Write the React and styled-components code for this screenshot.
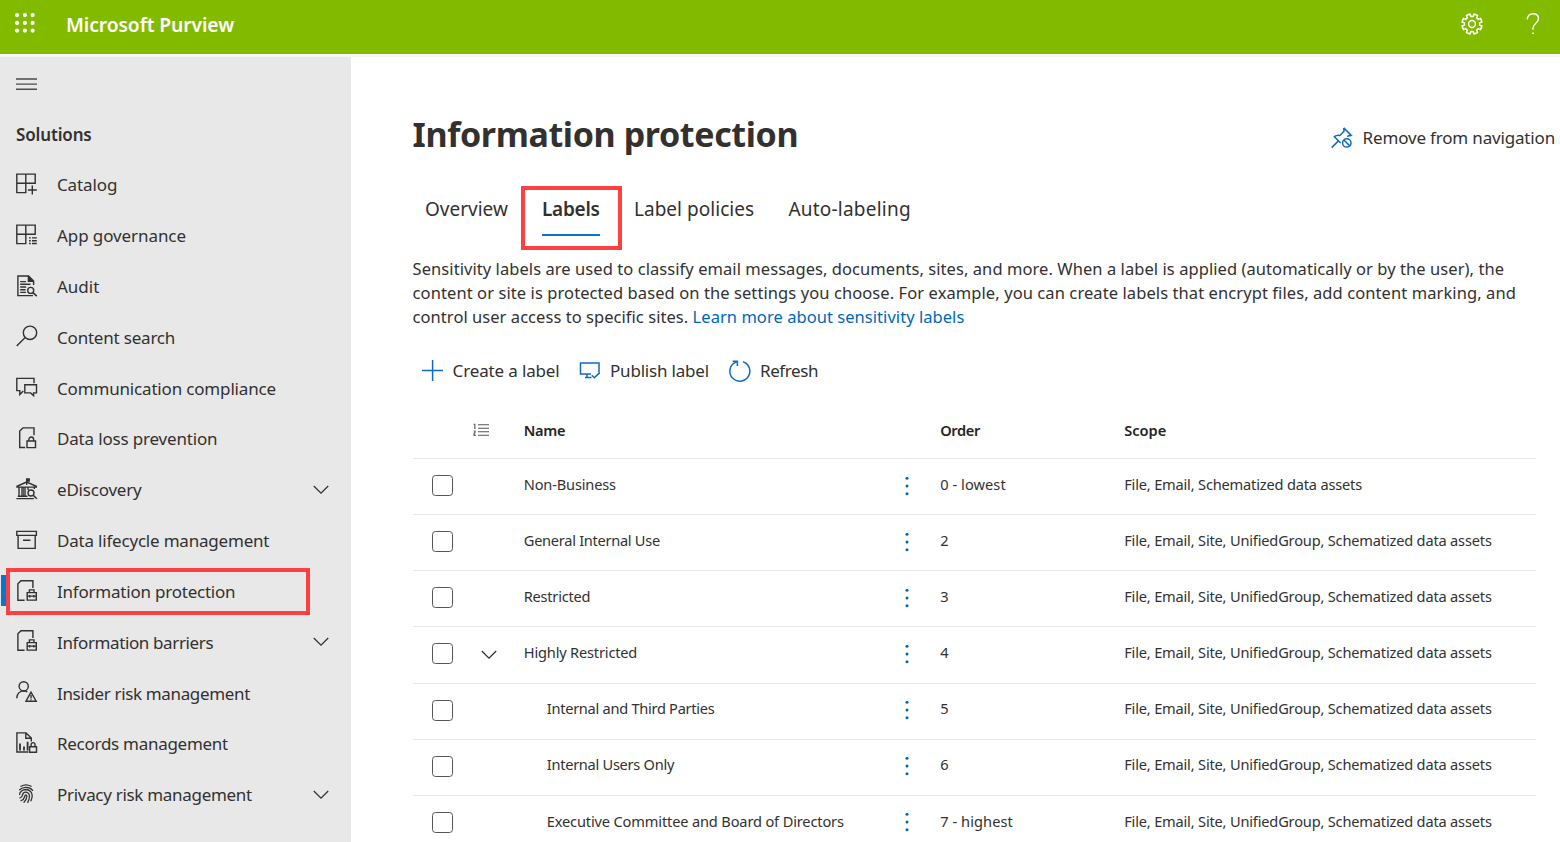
import React from "react";
import styled, { createGlobalStyle } from "styled-components";

const GlobalStyle = createGlobalStyle`
  * { box-sizing: border-box; }
  html, body { margin: 0; padding: 0; background: #fff; }
  body {
    font-family: "Noto Sans", "Open Sans", sans-serif;
    color: #323130;
    overflow: hidden;
  }
  svg { display: block; flex: none; }
`;

const Page = styled.div`
  width: 1560px;
  height: 842px;
  display: flex;
  flex-direction: column;
  overflow: hidden;
`;

const TopBar = styled.header`
  height: 54px;
  flex: none;
  display: flex;
  align-items: center;
  background: #82ba00;
  color: #fff;
  padding: 0 20px 6px 14px;
`;

const Brand = styled.div`
  margin-left: 30px;
  margin-right: auto;
  font-size: 19.3px;
  font-weight: 600;
  line-height: 26px;
  padding-top: 2px;
  white-space: nowrap;
  letter-spacing: -0.1px;
`;

const TopActions = styled.div`
  display: flex;
  align-items: center;
  gap: 43px;
`;

const Divider = styled.div`
  height: 3px;
  flex: none;
  background: linear-gradient(#fbfdf5, #f3f3f3);
`;

const Body = styled.div`
  flex: 1;
  min-height: 0;
  display: flex;
`;

const Sidebar = styled.nav`
  width: 351px;
  flex: none;
  background: #e8e8e8;
  padding-top: 16px;
`;

const MenuButton = styled.div`
  height: 22px;
  padding-left: 16px;
`;

const NavHeading = styled.div`
  padding-left: 16px;
  margin-top: 27px;
  height: 26px;
  line-height: 26px;
  font-size: 17px;
  font-weight: 600;
  letter-spacing: -0.15px;
`;

const NavList = styled.div`
  margin-top: 11.6px;
`;

const NavItem = styled.div`
  position: relative;
  height: 50.83px;
  display: flex;
  align-items: center;
  padding: 0 22px 0 16px;
`;

const NavIcon = styled.div`
  width: 22px;
  height: 22px;
  margin: 0 19px 2px 0;
`;

const NavLabel = styled.div`
  flex: 1;
  font-size: 17px;
  padding-bottom: 0.5px;
  white-space: nowrap;
  letter-spacing: ${(p) => p.$ls || 0}px;
`;

const ActiveMark = styled.div`
  position: absolute;
  left: 1px;
  top: 9px;
  width: 6px;
  height: 31px;
  background: #0078d4;
`;

const Highlight = styled.div`
  position: absolute;
  left: ${(p) => p.$x}px;
  top: ${(p) => p.$y}px;
  width: ${(p) => p.$w}px;
  height: ${(p) => p.$h}px;
  border: 4.4px solid #fe4040;
  pointer-events: none;
`;

const Main = styled.main`
  flex: 1;
  min-width: 0;
  padding: 51px 0 0 61.6px;
`;

const TitleRow = styled.div`
  display: flex;
  align-items: center;
  justify-content: space-between;
  height: 52px;
  padding-right: 5px;
`;

const Title = styled.h1`
  margin: 0;
  font-size: 34px;
  line-height: 52px;
  font-weight: 700;
  white-space: nowrap;
  letter-spacing: -0.37px;
`;

const RemoveAction = styled.div`
  display: flex;
  align-items: center;
  gap: 10px;
  padding-top: 7px;
  font-size: 17px;
  line-height: 24px;
  white-space: nowrap;
  letter-spacing: -0.17px;
`;

const Tabs = styled.div`
  display: flex;
  margin-top: 31px;
  padding-left: 12.4px;
  height: 60px;
`;

const Tab = styled.div`
  position: relative;
  width: ${(p) => p.$w}px;
  height: 45px;
  line-height: 37px;
  font-size: 19px;
  font-weight: ${(p) => (p.$active ? 600 : 400)};
  white-space: nowrap;
  letter-spacing: ${(p) => p.$ls || 0}px;
  margin-right: ${(p) => p.$gap}px;
  border-bottom: 2.5px solid ${(p) => (p.$active ? "#0b6fd3" : "transparent")};
`;

const Intro = styled.div`
  font-size: 16.5px;
  line-height: 24px;
  margin-top: 6px;
`;

const IntroLine = styled.div`
  white-space: nowrap;
  letter-spacing: ${(p) => p.$ls || 0}px;
`;

const Link = styled.span`
  color: #0067b8;
`;

const CommandBar = styled.div`
  display: flex;
  align-items: center;
  height: 24px;
  margin-top: 30px;
  padding-left: 9px;
`;

const Command = styled.div`
  display: flex;
  align-items: center;
  gap: 9px;
  width: ${(p) => p.$w}px;
  font-size: 17px;
  line-height: 24px;
  white-space: nowrap;
  letter-spacing: ${(p) => p.$ls || 0}px;
`;

const Table = styled.div`
  width: 1123.4px;
  margin-top: 20px;
`;

const Row = styled.div`
  display: grid;
  grid-template-columns: 60px 51.2px 375px 41.4px 184px 1fr;
  align-items: center;
  height: ${(p) => (p.$head ? 56 : 56.15)}px;
  border-bottom: 1px solid #e6e6e6;
  font-size: 14.6px;
  font-weight: ${(p) => (p.$head ? 600 : 400)};
  color: ${(p) => (p.$head ? "#242424" : "#323130")};
`;

const Cell = styled.div`
  white-space: nowrap;
  line-height: 22px;
  padding-left: ${(p) => p.$indent || 0}px;
  padding-bottom: ${(p) => (p.$head ? 1 : 5.8)}px;
  letter-spacing: ${(p) => p.$ls || 0}px;
`;

const IconCell = styled.div`
  display: flex;
  padding-left: ${(p) => p.$pad || 0}px;
  padding-bottom: ${(p) => p.$lift || 0}px;
`;

const Checkbox = styled.span`
  width: 21px;
  height: 21px;
  margin: 0 0 2px 19px;
  border: 1.5px solid #555;
  border-radius: 3.5px;
  background: #fff;
`;

function Icon({ size = 22, color = "#323130", sw = 1.4, children }) {
  return (
    <svg width={size} height={size} viewBox="0 0 22 22" fill="none" stroke={color} strokeWidth={sw}>
      {children}
    </svg>
  );
}

const grid = <path d="M.8 1.1H19.2V10.3H.8ZM.8 10.3V19.6H9.8V1.1" />;
const briefcaseDoc = (
  <>
    <path d="M16.9 8V.8H5L1.9 3.8V20.2H8.6" />
    <path d="M11.2 12.6H20.3V20.1H11.2ZM13.4 12.4V9.9H18V12.4M11.2 16.1H20.3M13.7 14.9V17.6M17.8 14.9V17.6" />
  </>
);

const icons = {
  catalog: (
    <>
      {grid}
      <path d="M16.3 12.4V21.4M11.9 17H20.8" />
    </>
  ),
  governance: (
    <>
      {grid}
      <path d="M13 13.9H14.8M13 16.7H14.8M13 19.5H14.8M16 13.9H20.8M16 16.7H20.8M16 19.5H20.8" />
    </>
  ),
  audit: (
    <>
      <path d="M17 20.6H1.9V1H12.6L17.6 6V10M12.4 1V6.2H17.6" />
      <path d="M12.8 2.2L16.5 6H12.8Z" fill="#323130" />
      <path d="M4.2 6.6H10M4.2 9.3H14.5M4.2 12H10.2M4.2 14.7H9.6M4.2 17.4H10" />
      <circle cx="14.7" cy="15.4" r="3" />
      <path d="M16.9 17.6L20.8 21.2" strokeWidth="1.6" />
    </>
  ),
  search: (
    <>
      <circle cx="14" cy="7.8" r="6.7" />
      <path d="M9.2 12.6L.7 21" />
    </>
  ),
  chat: (
    <>
      <path d="M18 7.2V2.4H.8V14.6H3.8V18.6L7.3 15" />
      <path d="M8.8 8.7H20.5V16.9H17.6V19.6L14.6 16.9H8.8Z" />
    </>
  ),
  lockDoc: (
    <>
      <path d="M18 8.3V.9H7L3.7 4V20.5H9.2" />
      <path d="M11 14H19.5V20.6H11ZM12.9 14V12.4A2.35 2.35 0 0 1 17.6 12.4V14" />
    </>
  ),
  court: (
    <>
      <path d="M10.7 7V1" />
      <path d="M10.7 1H13.2V3H10.7Z" fill="#323130" />
      <path d="M10.7 4L1 8.3V9.1H20.3V8.3Z" />
      <path d="M3 9V18.4M6 9V18.4M9 9V18.4M12 9V12M18.3 9V11M1.8 18.3H11.5M.4 20.6H17.8" />
      <path d="M7.5 9V18.4" strokeWidth=".8" />
      <circle cx="15" cy="15" r="3" />
      <path d="M17.2 17.2L20.8 20.8" strokeWidth="1.6" />
    </>
  ),
  archive: <path d="M.8 2.4H20.4V6.4H.8ZM2.1 6.4V19.4H19.2V6.4M7 11.3H14.4" />,
  briefcaseDoc,
  personAlert: (
    <>
      <circle cx="7.7" cy="5.3" r="4.6" />
      <path d="M.7 17.2C1.1 12.8 3.8 10.1 7.6 9.9C9 9.9 10.2 10.2 11.3 10.9" />
      <path d="M15 11.2L10 20.2H20.2Z" />
      <path d="M15 14V17.5M15 18.3V19.3" />
    </>
  ),
  records: (
    <>
      <path d="M12.4 20H.9V.9H10L15.3 6V9.6M9.8 .9V6.2H15.3" />
      <path d="M4 18.5V11.5M8 18.5V14.6M11.6 18.5V9.8" strokeWidth="1.8" />
      <path d="M13.6 14.7H20.5V20.2H13.6ZM15.1 14.7V12.6A1.95 1.95 0 0 1 19 12.6V14.7" />
    </>
  ),
  fingerprint: (
    <g strokeWidth="1.3" strokeLinecap="round">
      <path d="M4.9 3.3C7.9 1.6 12.1 1.6 15.1 3.3" />
      <path d="M3.7 6.8C6.8 3.6 13.6 3.6 16.6 7.4" />
      <path d="M3.6 11.6C3.7 8.6 6.6 6.5 10 6.5C13.8 6.6 16.3 9.4 16.2 13C16.1 14.8 15.6 16.4 15 17.8" />
      <path d="M4 14.9C7.4 14.2 5.8 11.6 7.4 10C9.4 8.2 13.2 9.2 13.5 12.6C13.6 15 12.8 17.4 11.8 19.4" />
      <path d="M5.1 17.7C8.8 16.6 8.3 13.8 9.1 12.4C9.9 11.5 10.9 12.1 10.9 13.2C10.7 15.8 9.6 17.8 8 19.3" />
    </g>
  ),
};

const Chevron = ({ color = "#323130" }) => (
  <svg width="16" height="10" viewBox="0 0 16 10" fill="none" stroke={color} strokeWidth="1.3">
    <path d="M.8 1L8 8.2L15.2 1" />
  </svg>
);

const gearOutline = () => {
  const parts = [];
  for (let i = 0; i < 8; i++) {
    const base = ((i + 0.5) * Math.PI) / 4;
    [[-0.25, 7.7], [-0.19, 10.2], [0.19, 10.2], [0.25, 7.7]].forEach(([d, r]) => {
      parts.push(`${(11 + r * Math.sin(base + d)).toFixed(2)} ${(11 - r * Math.cos(base + d)).toFixed(2)}`);
    });
  }
  return `M${parts.join("L")}Z`;
};

const Waffle = () => (
  <svg width="22" height="22" viewBox="0 0 22 22" fill="#fff">
    {[2.1, 9.9, 17.6].map((y) => [3.1, 10.9, 18.6].map((x) => <circle key={`${x}-${y}`} cx={x} cy={y} r="2.1" />))}
  </svg>
);

const PinIcon = () => (
  <Icon color="#0f6cbd" sw={1.5}>
    <path d="M.7 20.6L7.4 13.9M12.7 .9L20.3 8.4L19.2 8.8L17.6 8.6L16.4 9.7M9.6 16L3.4 9.7C5 8.4 6.9 8 8.9 8.4L13 4.2L12.7 .9" />
    <circle cx="15.8" cy="15.9" r="4.2" />
    <path d="M12.9 13L18.8 18.9" />
  </Icon>
);

const ListIcon = () => (
  <svg width="16" height="14" viewBox="0 0 16 14" fill="none" stroke="#555" strokeWidth="1.1">
    <path d="M5 1.8H16M5 5.2H16M5 8.8H16M5 12.2H16M.6 1.2H1.8V5.2M1 5.2H2.8M.6 8H2V9.8L1.1 10.2V12.4H2.8" />
  </svg>
);

const MoreIcon = () => (
  <svg width="4" height="20" viewBox="0 0 4 20" fill="#0067b8">
    <circle cx="2" cy="2.3" r="1.5" />
    <circle cx="2" cy="10" r="1.5" />
    <circle cx="2" cy="17.7" r="1.5" />
  </svg>
);

const navItems = [
  { label: "Catalog", icon: "catalog", ls: -0.12 },
  { label: "App governance", icon: "governance", ls: -0.09 },
  { label: "Audit", icon: "audit" },
  { label: "Content search", icon: "search", ls: -0.2 },
  { label: "Communication compliance", icon: "chat", ls: -0.17 },
  { label: "Data loss prevention", icon: "lockDoc", ls: -0.17 },
  { label: "eDiscovery", icon: "court", expandable: true, ls: -0.2 },
  { label: "Data lifecycle management", icon: "archive", ls: -0.2 },
  { label: "Information protection", icon: "briefcaseDoc", active: true, ls: -0.22 },
  { label: "Information barriers", icon: "briefcaseDoc", expandable: true, ls: -0.38 },
  { label: "Insider risk management", icon: "personAlert", ls: -0.35 },
  { label: "Records management", icon: "records", ls: -0.28 },
  { label: "Privacy risk management", icon: "fingerprint", expandable: true, ls: -0.3 },
];

const fullScope = "File, Email, Site, UnifiedGroup, Schematized data assets";
const rows = [
  { name: "Non-Business", order: "0 - lowest", scope: "File, Email, Schematized data assets", ls: -0.17 },
  { name: "General Internal Use", order: "2", scope: fullScope, ls: -0.28 },
  { name: "Restricted", order: "3", scope: fullScope, ls: -0.25 },
  { name: "Highly Restricted", order: "4", scope: fullScope, open: true, ls: -0.18 },
  { name: "Internal and Third Parties", order: "5", scope: fullScope, child: true, ls: -0.28 },
  { name: "Internal Users Only", order: "6", scope: fullScope, child: true, ls: -0.28 },
  { name: "Executive Committee and Board of Directors", order: "7 - highest", scope: fullScope, child: true, ls: -0.15 },
];

export default function App() {
  return (
    <Page>
      <GlobalStyle />
      <TopBar>
        <Waffle />
        <Brand>Microsoft Purview</Brand>
        <TopActions>
          <Icon color="#fff" sw={1.5}>
            <path d={gearOutline()} strokeLinejoin="round" />
            <circle cx="11" cy="11" r="3.4" />
          </Icon>
          <svg width="14" height="22" viewBox="0 0 14 22" fill="none" stroke="#fff" strokeWidth="1.4">
            <path d="M1.3 6.4C1.3 3 3.7 .8 7 .8C10.3 .8 12.5 2.8 12.5 5.8C12.5 10 7 10.4 7 15V16.8" />
            <path d="M7 19.4V21" strokeWidth="1.6" />
          </svg>
        </TopActions>
      </TopBar>
      <Divider />
      <Body>
        <Sidebar>
          <MenuButton>
            <svg width="21" height="22" viewBox="0 0 21 22" stroke="#4a4a4a" strokeWidth="1.4">
              <path d="M0 6H21M0 11.1H21M0 16.3H21" />
            </svg>
          </MenuButton>
          <NavHeading>Solutions</NavHeading>
          <NavList>
            {navItems.map((item) => (
              <NavItem key={item.label}>
                {item.active && <ActiveMark />}
                <NavIcon>
                  <Icon>{icons[item.icon]}</Icon>
                </NavIcon>
                <NavLabel $ls={item.ls}>{item.label}</NavLabel>
                {item.expandable && <Chevron />}
                {item.active && <Highlight $x={6} $y={2} $w={304} $h={46.5} />}
              </NavItem>
            ))}
          </NavList>
        </Sidebar>
        <Main>
          <TitleRow>
            <Title>Information protection</Title>
            <RemoveAction>
              <PinIcon />
              Remove from navigation
            </RemoveAction>
          </TitleRow>
          <Tabs>
            <Tab $w={83} $gap={34}>Overview</Tab>
            <Tab $w={58} $gap={34} $active $ls={-0.25}>
              Labels
              <Highlight $x={-21.3} $y={-5.2} $w={101} $h={64.5} />
            </Tab>
            <Tab $w={120} $gap={34.4} $ls={0.03}>Label policies</Tab>
            <Tab $w={123} $gap={0} $ls={0.22}>Auto-labeling</Tab>
          </Tabs>
          <Intro>
            <IntroLine $ls={0.065}>
              Sensitivity labels are used to classify email messages, documents, sites, and more. When a label is applied (automatically or by the user), the
            </IntroLine>
            <IntroLine $ls={0.085}>
              content or site is protected based on the settings you choose. For example, you can create labels that encrypt files, add content marking, and
            </IntroLine>
            <IntroLine $ls={0.05}>
              control user access to specific sites. <Link>Learn more about sensitivity labels</Link>
            </IntroLine>
          </Intro>
          <CommandBar>
            <Command $w={157.4} $ls={-0.15}>
              <Icon color="#0f6cbd" sw={1.5}>
                <path d="M10.6 0V21M0 10.5H21" />
              </Icon>
              Create a label
            </Command>
            <Command $w={150} $ls={-0.19}>
              <Icon color="#0f6cbd" sw={1.5}>
                <path d="M12 13.9H1.5V3H20V12.5M8 13.9V17.3M6 17.4H12.5" />
                <path d="M12.8 15.2L15.4 17.8L20.8 12.6" />
              </Icon>
              Publish label
            </Command>
            <Command $w={100} $ls={-0.4}>
              <Icon color="#0f6cbd" sw={1.5}>
                <path d="M14 1.7A10 10 0 1 1 4.2 3.7L8.2 1.4M3.6 1.2H8.4V6" />
              </Icon>
              Refresh
            </Command>
          </CommandBar>
          <Table>
            <Row $head>
              <span />
              <IconCell $lift={2}>
                <ListIcon />
              </IconCell>
              <Cell $head $ls={-0.3}>Name</Cell>
              <span />
              <Cell $head $ls={-0.35}>Order</Cell>
              <Cell $head>Scope</Cell>
            </Row>
            {rows.map((row) => (
              <Row key={row.name}>
                <Checkbox />
                <IconCell $pad={8}>{row.open && <Chevron />}</IconCell>
                <Cell $indent={row.child ? 23 : 0} $ls={row.ls}>{row.name}</Cell>
                <IconCell $pad={6} $lift={2}>
                  <MoreIcon />
                </IconCell>
                <Cell $ls={0.07}>{row.order}</Cell>
                <Cell $ls={-0.18}>{row.scope}</Cell>
              </Row>
            ))}
          </Table>
        </Main>
      </Body>
    </Page>
  );
}
